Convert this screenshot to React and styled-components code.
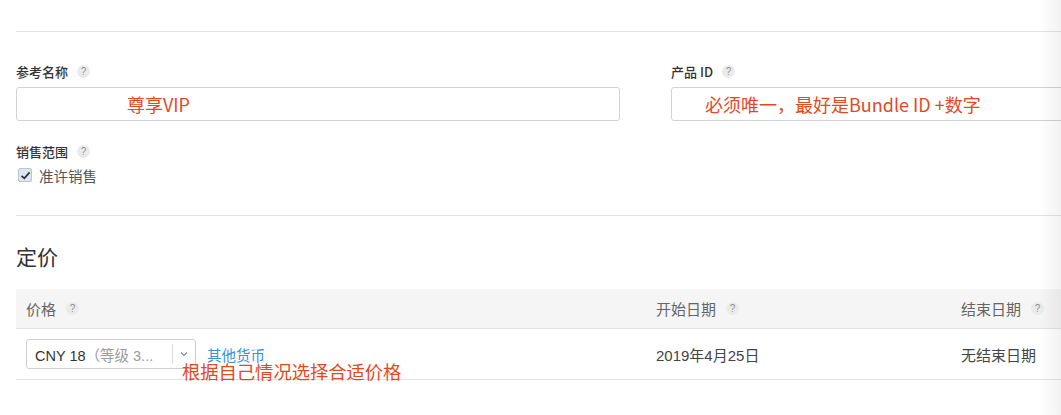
import React from "react";
import styled, { createGlobalStyle } from "styled-components";

const GlobalStyle = createGlobalStyle`
  html, body {
    margin: 0;
    padding: 0;
    background: #fff;
  }
  body {
    font-family: "Liberation Sans", "Noto Sans CJK SC", sans-serif;
    color: #333;
  }
`;

const App = () => {
  return (
    <Page>
      <GlobalStyle />
      <Rule $top={31} />
      <FieldRow>
        <Field>
          <Label>
            参考名称<Help>?</Help>
          </Label>
          <Input $indent={110}>
            <Note>尊享VIP</Note>
          </Input>
        </Field>
        <Field>
          <Label>
            产品 ID<Help>?</Help>
          </Label>
          <Input $indent={33}>
            <Note>必须唯一，最好是Bundle ID +数字</Note>
          </Input>
        </Field>
      </FieldRow>

      <Scope>
        <Label>
          销售范围<Help>?</Help>
        </Label>
        <Check>
          <Box>
            <svg width="11" height="11" viewBox="0 0 11 11">
              <path
                d="M1.5 5.8 L4.3 8.4 L9.6 2.4"
                fill="none"
                stroke="#2b2f36"
                strokeWidth="1.7"
              />
            </svg>
          </Box>
          准许销售
        </Check>
      </Scope>

      <Rule $top={31} />
      <Heading>定价</Heading>

      <Table>
        <HeadRow>
          <Cell $w={630}>
            价格<Help $gap={10}>?</Help>
          </Cell>
          <Cell $w={305}>
            开始日期<Help $gap={10}>?</Help>
          </Cell>
          <Cell $w={200}>
            结束日期<Help $gap={10}>?</Help>
          </Cell>
        </HeadRow>
        <BodyRow>
          <Cell $w={630}>
            <Select>
              <SelectText>
                CNY 18<Dim>（等级 3...</Dim>
              </SelectText>
              <Caret>
                <svg width="8" height="6" viewBox="0 0 8 6">
                  <path d="M1 1.5 L4 4.5 L7 1.5" fill="none" stroke="#888" strokeWidth="1.1" />
                </svg>
              </Caret>
            </Select>
            <Link>其他货币</Link>
            <FloatNote>根据自己情况选择合适价格</FloatNote>
          </Cell>
          <Cell $w={305}>2019年4月25日</Cell>
          <Cell $w={200}>无结束日期</Cell>
        </BodyRow>
      </Table>
      <EdgeShade />
    </Page>
  );
};

export default App;

const Page = styled.div`
  position: relative;
  width: 1061px;
  height: 415px;
  padding-left: 16px;
  box-sizing: border-box;
  overflow: hidden;
`;

const Rule = styled.div`
  margin-top: ${(p) => p.$top}px;
  height: 1px;
  background: #e3e3e3;
  width: 1100px;
`;

const FieldRow = styled.div`
  display: grid;
  grid-template-columns: 604px 604px;
  column-gap: 51px;
  margin-top: 31px;
`;

const Field = styled.div`
  display: flex;
  flex-direction: column;
`;

const Label = styled.div`
  display: flex;
  align-items: center;
  height: 16px;
  font-family: "Noto Sans CJK SC", "Liberation Sans", sans-serif;
  font-size: 13px;
  font-weight: 500;
  color: #333;
  white-space: pre;
`;

const Help = styled.span`
  display: inline-flex;
  align-items: center;
  justify-content: center;
  flex-shrink: 0;
  width: 13px;
  height: 13px;
  margin-left: ${(p) => p.$gap || 9}px;
  border-radius: 50%;
  background: #ebebeb;
  color: #8f8f8f;
  font-family: "Liberation Sans", sans-serif;
  font-size: 10px;
  font-weight: 400;
`;

const Input = styled.div`
  display: flex;
  align-items: center;
  margin-top: 8px;
  height: 34px;
  box-sizing: border-box;
  border: 1px solid #d2d2d2;
  border-radius: 3px;
  padding-left: ${(p) => p.$indent}px;
  background: #fff;
`;

const Note = styled.span`
  font-family: "Noto Sans CJK SC", "Liberation Sans", sans-serif;
  font-size: 18px;
  color: #e2491f;
  line-height: 1;
  white-space: nowrap;
`;

const Scope = styled.div`
  margin-top: 22px;
`;

const Check = styled.div`
  display: flex;
  align-items: center;
  gap: 7px;
  margin-top: 7px;
  height: 18px;
  font-size: 14.5px;
  color: #555;
`;

const Box = styled.span`
  display: inline-flex;
  align-items: center;
  justify-content: center;
  width: 14px;
  height: 14px;
  margin-left: 2px;
  box-sizing: border-box;
  border: 1px solid #b9c4d3;
  border-radius: 2px;
  background: #dfe6f0;
`;

const Heading = styled.h2`
  margin: 30px 0 0;
  height: 24px;
  line-height: 24px;
  font-size: 21px;
  font-weight: 400;
  color: #333;
`;

const Table = styled.div`
  margin-top: 19px;
  width: 1140px;
`;

const HeadRow = styled.div`
  display: flex;
  height: 39px;
  align-items: center;
  background: #f5f5f5;
  border-bottom: 1px solid #e2e2e2;
  color: #666;
`;

const BodyRow = styled.div`
  display: flex;
  height: 50px;
  align-items: center;
  border-bottom: 1px solid #e2e2e2;
  color: #444;
`;

const Cell = styled.div`
  position: relative;
  display: flex;
  align-items: center;
  flex-shrink: 0;
  width: ${(p) => p.$w}px;
  padding-left: 10px;
  box-sizing: border-box;
  font-size: 15px;
  white-space: nowrap;
`;

const Select = styled.div`
  display: flex;
  align-items: center;
  width: 170px;
  height: 30px;
  box-sizing: border-box;
  border: 1px solid #cfcfcf;
  border-radius: 3px;
  background: #fff;
`;

const SelectText = styled.span`
  flex: 1;
  padding-left: 8px;
  font-size: 14.5px;
  color: #333;
`;

const Dim = styled.span`
  color: #9b9b9b;
`;

const Caret = styled.span`
  display: flex;
  align-items: center;
  justify-content: center;
  width: 22px;
  height: 20px;
  border-left: 1px solid #dcdcdc;
`;

const Link = styled.span`
  margin-left: 11px;
  font-size: 14.5px;
  color: #3d8fd1;
`;

const FloatNote = styled.span`
  position: absolute;
  left: 166px;
  top: 23px;
  font-family: "Noto Sans CJK SC", "Liberation Sans", sans-serif;
  font-size: 18.3px;
  line-height: 1;
  color: #e2491f;
`;

const EdgeShade = styled.div`
  position: absolute;
  top: 0;
  right: 0;
  width: 22px;
  height: 100%;
  background: linear-gradient(to right, rgba(0, 0, 0, 0), rgba(0, 0, 0, 0.05));
  pointer-events: none;
`;
